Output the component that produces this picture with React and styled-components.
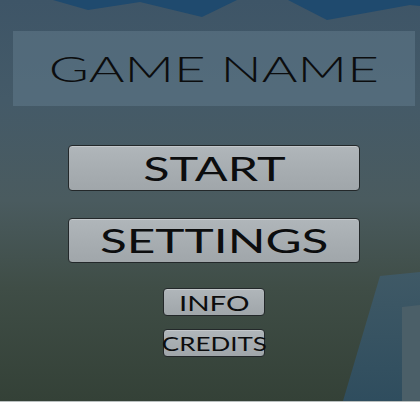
import React from "react";
import styled, { createGlobalStyle } from "styled-components";

const Global = createGlobalStyle`
  html, body { margin: 0; padding: 0; background: #ffffff; }
  body { font-family: "Lato", "DejaVu Sans", sans-serif; }
`;

const Scene = styled.div`
  position: relative;
  width: 420px;
  height: 401px;
  overflow: hidden;
  border-bottom: 1px solid #b9bfbf;
  background: linear-gradient(
    180deg,
    #3e5567 0%,
    #445a68 25%,
    #4a5b5f 50%,
    #3f4d46 72%,
    #344137 100%
  );
`;

const Backdrop = styled.svg`
  position: absolute;
  left: 0;
  top: 0;
  width: 420px;
  height: 401px;
`;

const Menu = styled.div`
  position: relative;
  display: flex;
  flex-direction: column;
  align-items: center;
  padding: 31px 0 0 8px;
`;

const TitlePanel = styled.div`
  width: 402px;
  height: 75px;
  background: rgba(96, 122, 138, 0.55);
  display: flex;
  align-items: center;
  justify-content: center;
  margin-bottom: 39px;
`;

const Label = styled.span`
  display: inline-block;
  color: #0c0d0e;
  font-family: "Lato", "DejaVu Sans", sans-serif;
  font-weight: ${(p) => p.$weight || 400};
  font-size: ${(p) => p.$size}px;
  line-height: 1;
  white-space: nowrap;
  transform: scaleX(${(p) => p.$sx});
  transform-origin: center;
`;

const Button = styled.button`
  box-sizing: border-box;
  width: ${(p) => p.$w}px;
  height: ${(p) => p.$h}px;
  margin: 0 0 ${(p) => p.$gap}px 0;
  padding: 0;
  border: 1.5px solid #23282a;
  border-radius: 4px;
  background: linear-gradient(180deg, #b0b6ba 0%, #a6acb0 60%, #a0a6aa 100%);
  box-shadow: inset 0 1px 0 rgba(255, 255, 255, 0.25);
  display: flex;
  align-items: center;
  justify-content: center;
  overflow: visible;
  cursor: pointer;
`;

export default function App() {
  return (
    <>
      <Global />
      <Scene>
        <Backdrop viewBox="0 0 420 401">
          <defs>
            <linearGradient id="shard" x1="0" y1="0" x2="0" y2="1">
              <stop offset="0" stopColor="#3f5966" />
              <stop offset="1" stopColor="#2f4d5e" />
            </linearGradient>
          </defs>
          <polygon
            points="53,0 88,10 140,2 202,17 237,0"
            fill="#1f4a6e"
          />
          <polygon
            points="288,0 327,20 410,5 420,6 420,0"
            fill="#1f4a6e"
          />
          <polygon
            points="380,276 420,272 420,401 343,401"
            fill="url(#shard)"
          />
          <polygon points="402,307 420,305 420,401 402,401" fill="#4b5f68" />
        </Backdrop>
        <Menu>
          <TitlePanel>
            <Label $size={35} $weight={300} $sx={1.56}>
              GAME NAME
            </Label>
          </TitlePanel>
          <Button $w={292} $h={46} $gap={27}>
            <Label $size={33} $weight={400} $sx={1.47}>
              START
            </Label>
          </Button>
          <Button $w={292} $h={45} $gap={25}>
            <Label $size={33} $weight={400} $sx={1.5}>
              SETTINGS
            </Label>
          </Button>
          <Button $w={102} $h={28} $gap={13}>
            <Label $size={21} $weight={400} $sx={1.4}>
              INFO
            </Label>
          </Button>
          <Button $w={102} $h={28} $gap={0}>
            <Label $size={20} $weight={400} $sx={1.3}>
              CREDITS
            </Label>
          </Button>
        </Menu>
      </Scene>
    </>
  );
}
